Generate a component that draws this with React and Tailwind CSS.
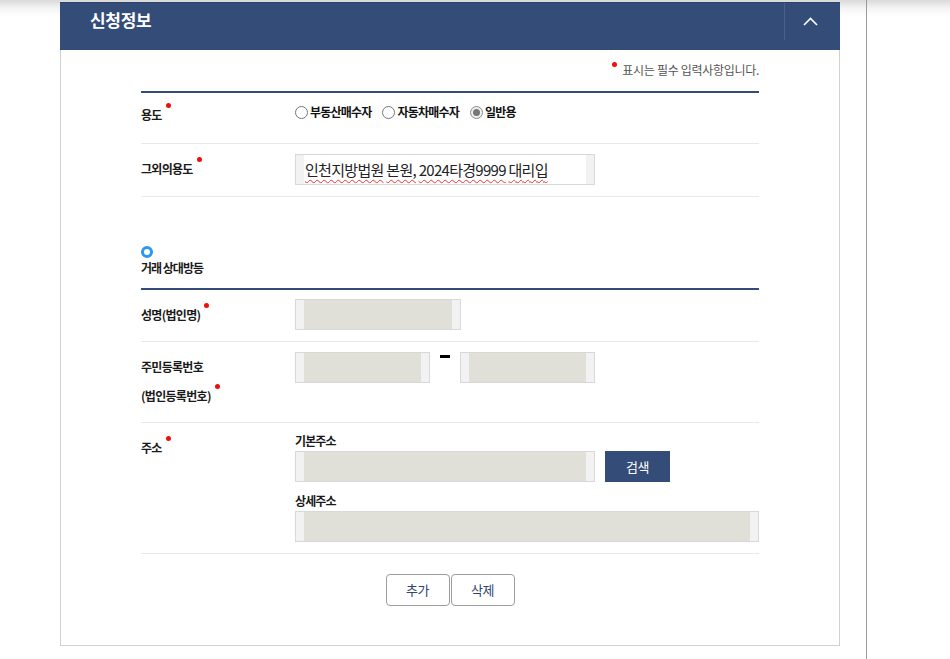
import React from 'react';

const Dot = () => (
  <span className="relative -top-[11px] ml-[4px] inline-block h-[5px] w-[5px] rounded-full bg-[#f20d0d] align-middle" />
);

/** grey read-only box with the light side strips */
const Field = ({ className = '', fill = 'bg-[#e0dfd8]', children }) => (
  <div className={`flex h-[31px] border border-[#d8d8d8] ${className}`}>
    <div className="w-[8px] bg-[#f2f2f2]" />
    <div className={`flex flex-1 items-center ${fill}`}>{children}</div>
    <div className="w-[8px] bg-[#f2f2f2]" />
  </div>
);

const Radio = ({ label, checked }) => (
  <label className="flex items-center">
    <span
      className={`flex h-[13px] w-[13px] items-center justify-center rounded-full border ${
        checked ? 'border-[#8c8c8c] bg-[#f0f0f0]' : 'border-[#767676] bg-white'
      }`}
    >
      {checked && <span className="h-[7px] w-[7px] rounded-full bg-[#777]" />}
    </span>
    <span className="ml-[2px] text-[12px] font-bold leading-[16px] tracking-[-0.8px] text-[#111]">{label}</span>
  </label>
);

const Spell = ({ children }) => (
  <span className="underline decoration-[#e33] decoration-wavy decoration-1 underline-offset-[3px]">{children}</span>
);

const Label = ({ children, className = '' }) => (
  <div className={`w-[154px] shrink-0 text-[12px] font-bold leading-[18px] tracking-[-0.7px] text-[#1a1a1a] ${className}`}>
    {children}
  </div>
);

export default function App() {
  return (
    <div className="h-[659px] w-[950px] overflow-hidden bg-[linear-gradient(to_bottom,#d9d9d9_0px,#f4f4f4_8px,#ffffff_16px)] font-['Noto_Sans_CJK_KR','Noto_Sans',sans-serif]">
      <div className="flex h-full">
        <div className="h-full w-[867px] border-r border-[#9a9a9a] pl-[60px] pt-[2px]">
          <section className="w-[780px]">
            <header className="flex h-[48px] justify-between border-t border-[#2c416a] bg-[#344c78]">
              <h2 className="pl-[30px] pt-[5px] text-[17px] font-bold leading-[24px] tracking-[-0.3px] text-white">신청정보</h2>
              <div className="flex">
                <div className="h-[37px] w-px bg-[#4b6090]" />
                <button type="button" className="flex h-[37px] w-[55px] items-center justify-center pr-[4px]">
                  <svg width="15" height="9" viewBox="0 0 15 9" fill="none" stroke="white" strokeWidth="1.6">
                    <polyline points="1,8 7.5,1.5 14,8" />
                  </svg>
                </button>
              </div>
            </header>

            <div className="h-[596px] border border-t-0 border-[#d0d0d0] px-[80px] pt-[11px]">
              <p className="flex h-[18px] items-center justify-end text-[12px] leading-[18px] tracking-[-0.3px] text-[#555]">
                <span className="relative -top-[6px] mr-[5px] inline-block h-[5px] w-[5px] rounded-full bg-[#f20d0d]" />
                표시는 필수 입력사항입니다.
              </p>

              <div className="mt-[12px] border-t-2 border-[#344c78]">
                <div className="flex h-[51px] border-b border-[#e9e9e9]">
                  <Label className="pt-[13px]">
                    용도
                    <Dot />
                  </Label>
                  <div className="flex items-start gap-[11px] pt-[11px]">
                    <Radio label="부동산매수자" />
                    <Radio label="자동차매수자" />
                    <Radio label="일반용" checked />
                  </div>
                </div>

                <div className="flex h-[53px] border-b border-[#e9e9e9]">
                  <Label className="pt-[16px]">
                    그외의용도
                    <Dot />
                  </Label>
                  <div className="pt-[10px]">
                    <Field className="w-[300px]" fill="bg-white">
                      <span className="pl-[1px] text-[15px] leading-[20px] tracking-[-0.7px] text-[#222]">
                        <Spell>인천지방법원</Spell> <Spell>본원,</Spell> <Spell>2024타경9999</Spell> <Spell>대리입</Spell>
                      </span>
                    </Field>
                  </div>
                </div>
              </div>

              <div className="mt-[49px]">
                <span className="block h-[12px] w-[12px] rounded-full border-[3px] border-[#2f97ee]" />
                <h3 className="mt-[1px] text-[12px] font-bold leading-[18px] tracking-[-1px] text-[#1a1a1a]">거래 상대방등</h3>
              </div>

              <div className="mt-[11px] border-t-2 border-[#344c78]">
                <div className="flex h-[52px] border-b border-[#e9e9e9]">
                  <Label className="pt-[16px]">
                    성명(법인명)
                    <Dot />
                  </Label>
                  <div className="pt-[9px]">
                    <Field className="w-[166px]" />
                  </div>
                </div>

                <div className="flex h-[81px] border-b border-[#e9e9e9]">
                  <Label className="pt-[10px] !leading-[29px]">
                    주민등록번호
                    <br />
                    (법인등록번호)
                    <Dot />
                  </Label>
                  <div className="flex items-start pt-[10px]">
                    <Field className="w-[135px]" />
                    <span className="mx-[10px] mt-[3px] h-[3px] w-[10px] bg-black" />
                    <Field className="w-[135px]" />
                  </div>
                </div>

                <div className="flex h-[131px] border-b border-[#e9e9e9]">
                  <Label className="pt-[16px]">
                    주소
                    <Dot />
                  </Label>
                  <div className="flex-1 pt-[9px]">
                    <div className="text-[12px] font-bold leading-[18px] tracking-[-0.9px] text-[#1a1a1a]">기본주소</div>
                    <div className="mt-[1px] flex gap-[10px]">
                      <Field className="w-[300px]" />
                      <button
                        type="button"
                        className="h-[31px] w-[65px] bg-[#344c78] text-[13px] leading-[31px] tracking-[-0.5px] text-white"
                      >
                        검색
                      </button>
                    </div>
                    <div className="mt-[10px] text-[12px] font-bold leading-[18px] tracking-[-0.9px] text-[#1a1a1a]">상세주소</div>
                    <Field className="mt-[1px] w-full" />
                  </div>
                </div>
              </div>

              <div className="mt-[20px] flex justify-center gap-[1px]">
                <button
                  type="button"
                  className="h-[32px] w-[64px] rounded-[4px] border border-[#9c9c9c] bg-white text-[13px] tracking-[-0.5px] text-[#2f4470]"
                >
                  추가
                </button>
                <button
                  type="button"
                  className="h-[32px] w-[64px] rounded-[4px] border border-[#9c9c9c] bg-white text-[13px] tracking-[-0.5px] text-[#2f4470]"
                >
                  삭제
                </button>
              </div>
            </div>
          </section>
        </div>
      </div>
    </div>
  );
}
